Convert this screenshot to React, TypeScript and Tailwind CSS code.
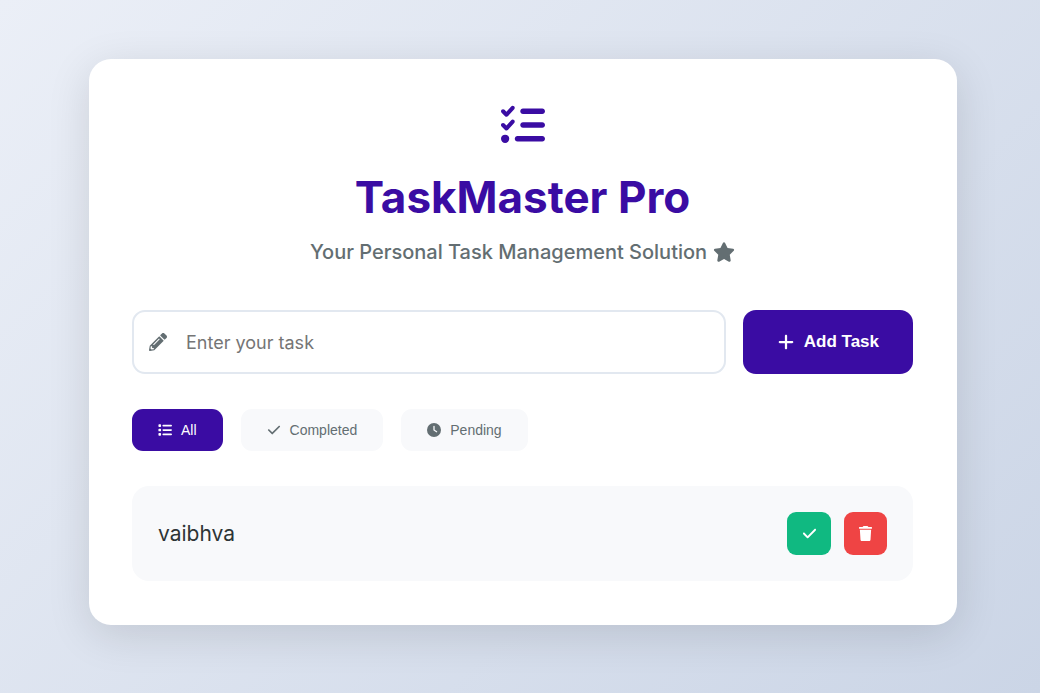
import { useState } from "react";
import type { FormEvent } from "react";
import { FaPencilAlt } from "react-icons/fa";
import {
  FaCheck,
  FaClock,
  FaList,
  FaListCheck,
  FaPlus,
  FaStar,
  FaTrash,
} from "react-icons/fa6";

type Filter = "all" | "completed" | "pending";
type Task = { id: number; text: string; done: boolean };

const filters = [
  { key: "all", label: "All", Icon: FaList },
  { key: "completed", label: "Completed", Icon: FaCheck },
  { key: "pending", label: "Pending", Icon: FaClock },
] as const;

export default function App() {
  const [tasks, setTasks] = useState<Task[]>([{ id: 1, text: "vaibhva", done: false }]);
  const [filter, setFilter] = useState<Filter>("all");
  const [draft, setDraft] = useState("");

  const addTask = (event: FormEvent) => {
    event.preventDefault();
    const text = draft.trim();
    if (!text) return;
    setTasks([...tasks, { id: Date.now(), text, done: false }]);
    setDraft("");
  };

  const visible = tasks.filter(
    (task) => filter === "all" || (filter === "completed") === task.done,
  );

  return (
    <div className="min-h-screen bg-[linear-gradient(135deg,#ebeff7_0%,#cbd5e6_100%)] pt-[59px] pr-[83px] pb-[68px] pl-[89px] font-['Inter',sans-serif]">
      <main className="mx-auto w-full max-w-[868px] rounded-[22px] bg-white pt-[44px] pr-[44px] pb-[44px] pl-[43px] shadow-[0_10px_44px_rgba(0,0,0,0.12)]">
        <header className="flex flex-col items-center text-center text-[#3a0ca3]">
          <FaListCheck size={44} aria-hidden="true" />
          <h1 className="mt-5 text-[44px] leading-[60px] font-bold">TaskMaster Pro</h1>
          <p className="mt-2.5 flex items-center gap-1.5 text-[20px] leading-[30px] font-medium text-[#636e72]">
            Your Personal Task Management Solution
            <FaStar size={22} aria-hidden="true" />
          </p>
        </header>

        <form onSubmit={addTask} className="mt-[43px] flex gap-[17px]">
          <label className="flex h-16 min-w-0 flex-1 items-center gap-[19px] rounded-[13px] border-2 border-[#e2e8f0] bg-white px-[15px] text-[#636e72]">
            <FaPencilAlt size={18} aria-hidden="true" />
            <input
              type="text"
              aria-label="Enter your task"
              placeholder="Enter your task"
              value={draft}
              onChange={(event) => setDraft(event.target.value)}
              className="min-w-0 flex-1 bg-transparent text-[18px] text-[#2d3436] outline-none placeholder:text-[#757575]"
            />
          </label>
          <button
            type="submit"
            className="flex h-16 items-center gap-[9px] rounded-[13px] bg-[#3a0ca3] px-[34px] font-['Liberation_Sans',sans-serif] text-[17px] font-bold text-white"
          >
            <FaPlus size={18} aria-hidden="true" />
            Add Task
          </button>
        </form>

        <div className="mt-[35px] flex gap-[18px]">
          {filters.map(({ key, label, Icon }) => (
            <button
              key={key}
              type="button"
              aria-pressed={filter === key}
              onClick={() => setFilter(key)}
              className={`flex h-[42px] items-center gap-[9px] rounded-[11px] px-[26px] font-['Liberation_Sans',sans-serif] text-[14px] ${
                filter === key ? "bg-[#3a0ca3] text-white" : "bg-[#f8f9fb] text-[#636e72]"
              }`}
            >
              <Icon size={14} aria-hidden="true" />
              {label}
            </button>
          ))}
        </div>

        <ul className="mt-[35px] flex flex-col gap-4">
          {visible.map((task) => (
            <li
              key={task.id}
              className="flex items-center gap-[13px] rounded-[17px] bg-[#f8f9fb] p-[26px]"
            >
              <span
                className={`min-w-0 flex-1 text-[21px] text-[#2d3436] ${task.done ? "line-through" : ""}`}
              >
                {task.text}
              </span>
              <button
                type="button"
                aria-label="Complete task"
                onClick={() =>
                  setTasks(tasks.map((t) => (t.id === task.id ? { ...t, done: !t.done } : t)))
                }
                className="flex h-[43px] w-11 items-center justify-center rounded-[9px] bg-[#10b981] text-white"
              >
                <FaCheck size={15} aria-hidden="true" />
              </button>
              <button
                type="button"
                aria-label="Delete task"
                onClick={() => setTasks(tasks.filter((t) => t.id !== task.id))}
                className="flex size-[43px] items-center justify-center rounded-[9px] bg-[#ef4444] text-white"
              >
                <FaTrash size={15} aria-hidden="true" />
              </button>
            </li>
          ))}
        </ul>
      </main>
    </div>
  );
}
